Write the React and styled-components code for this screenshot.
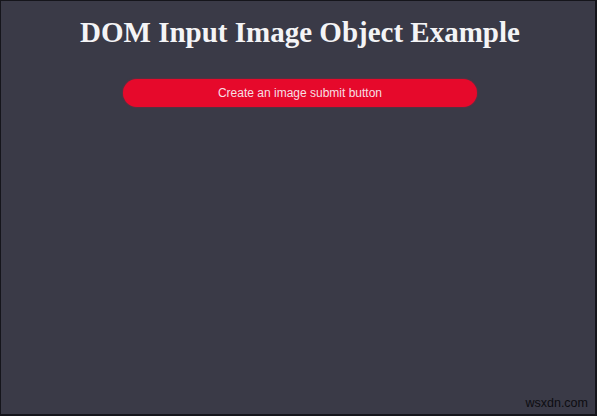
import styled, { createGlobalStyle } from "styled-components";

const GlobalStyle = createGlobalStyle`
  html, body {
    margin: 0;
    padding: 0;
    background: #ffffff;
  }
`;

// Outer white page with the framed screenshot inside
const Page = styled.div`
  width: 600px;
  height: 419px;
  padding: 0 3px 3px 0;
  box-sizing: border-box;
  background: #ffffff;
`;

const Frame = styled.div`
  position: relative;
  height: 100%;
  box-sizing: border-box;
  border: 1px solid #15151b;
  border-width: 1px 2px 2px 1px;
  padding-left: 4px;
  background: #3a3a47;
  display: flex;
  flex-direction: column;
  align-items: center;
`;

const Title = styled.h1`
  margin: 14px 0 0;
  font-family: "Liberation Serif", "Times New Roman", serif;
  font-weight: bold;
  font-size: 29px;
  line-height: 35px;
  color: #f4f4f6;
`;

const SubmitButton = styled.button`
  margin-top: 29px;
  width: 354px;
  height: 28px;
  border: none;
  border-radius: 14px;
  background: #e6092b;
  color: #f7dfe3;
  font-family: "Liberation Sans", Arial, sans-serif;
  font-size: 12px;
  cursor: pointer;
  box-shadow: 0 0 2px rgba(230, 9, 43, 0.6);
`;

// Watermark lies over the bottom-right corner of the panel
const Watermark = styled.div`
  position: absolute;
  right: 7px;
  bottom: 3px;
  font-family: "Liberation Sans", Arial, sans-serif;
  font-size: 12.5px;
  line-height: 15px;
  color: #0d0d11;
`;

const App = () => {
  return (
    <>
      <GlobalStyle />
      <Page>
        <Frame>
          <Title>DOM Input Image Object Example</Title>
          <SubmitButton>Create an image submit button</SubmitButton>
          <Watermark>wsxdn.com</Watermark>
        </Frame>
      </Page>
    </>
  );
};

export default App;
